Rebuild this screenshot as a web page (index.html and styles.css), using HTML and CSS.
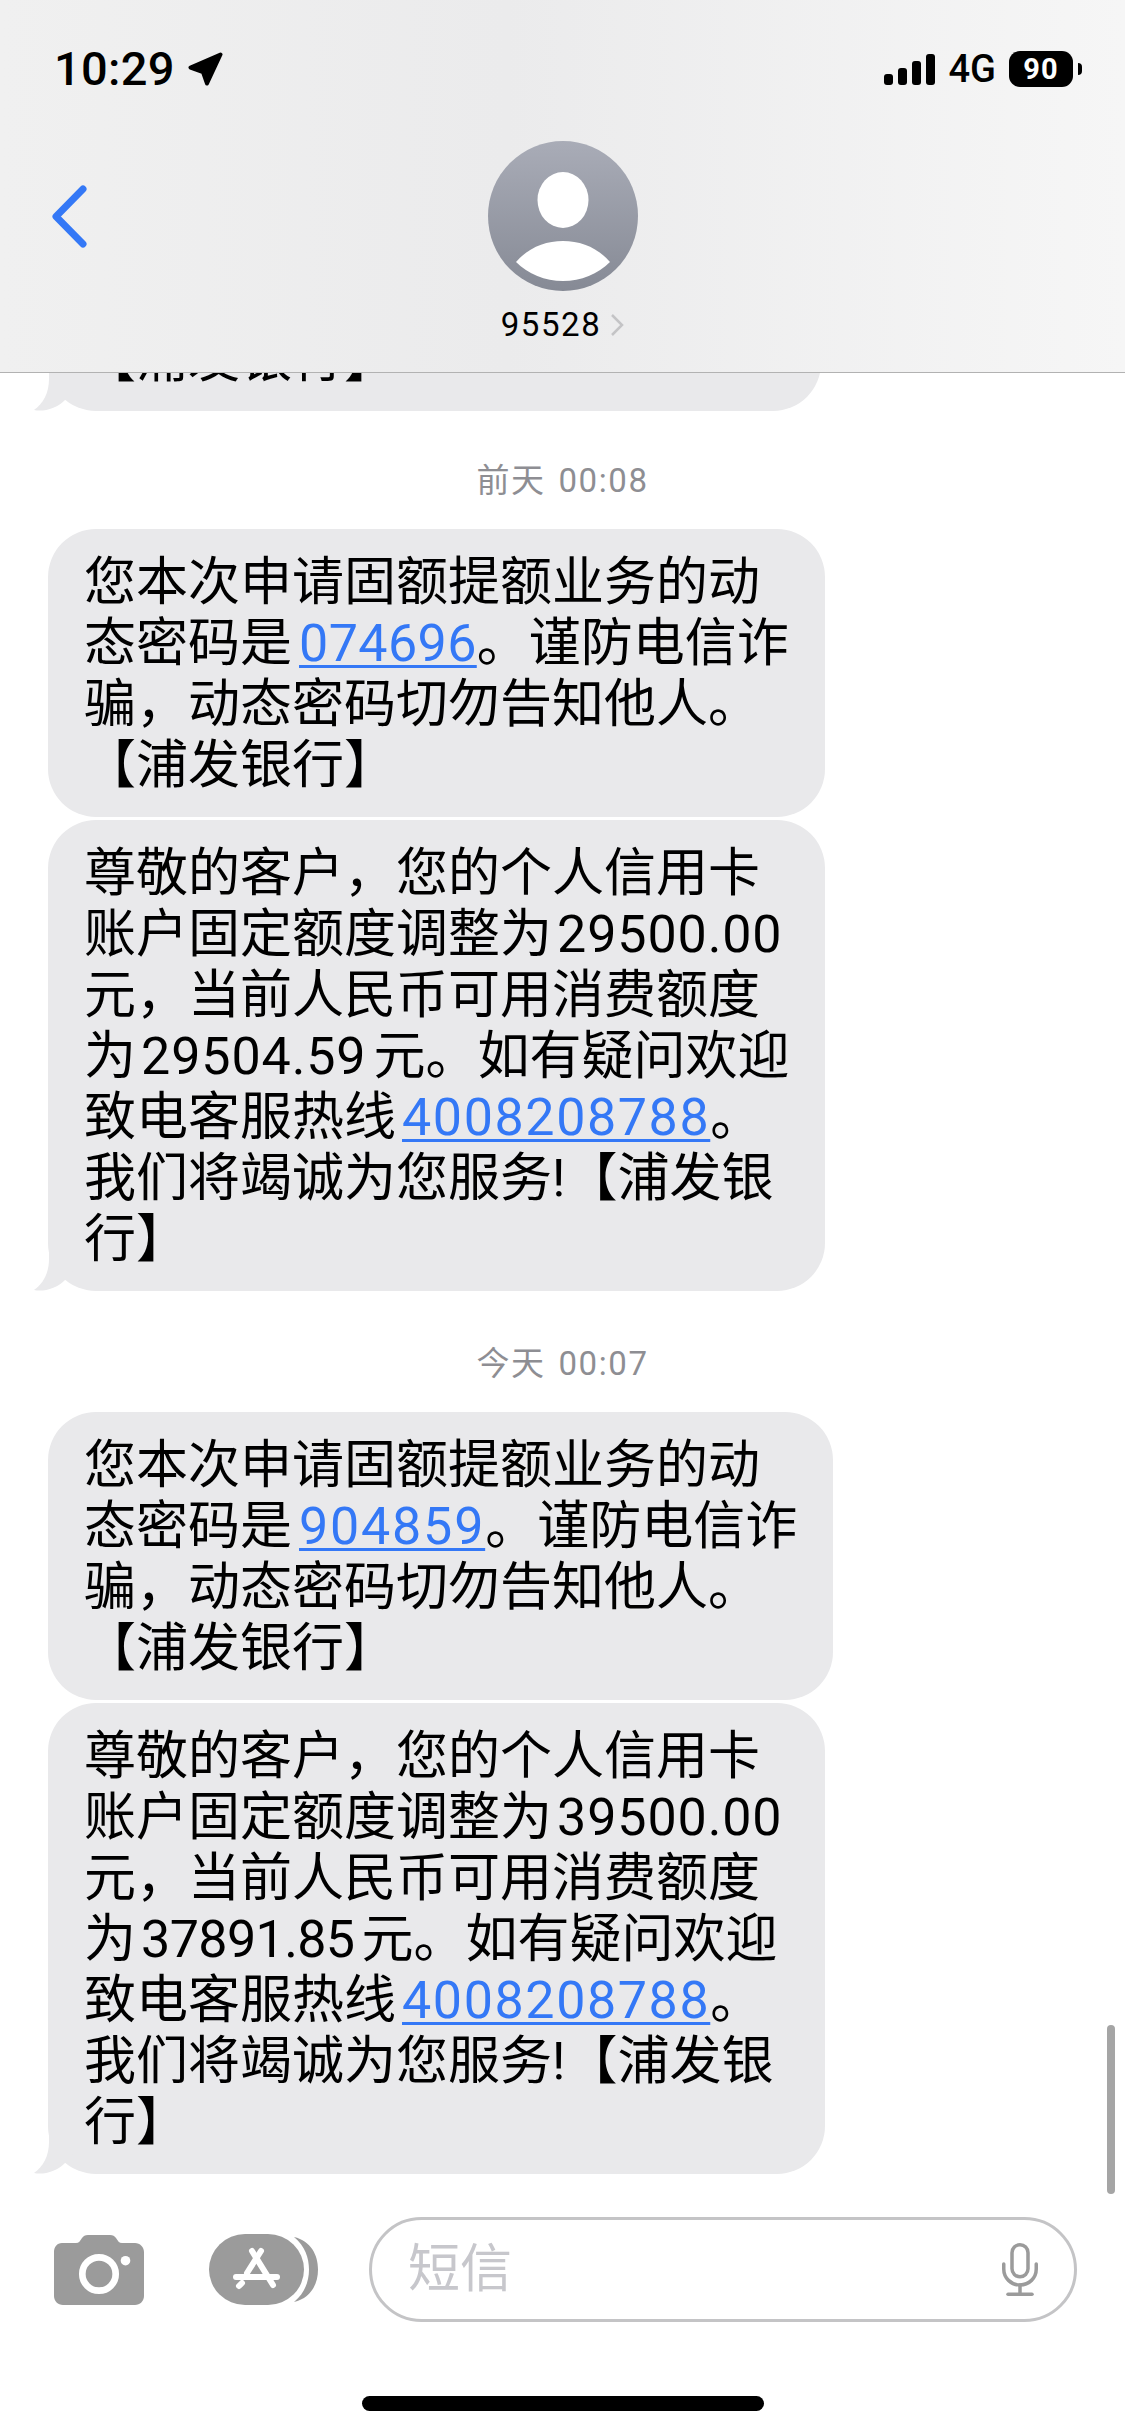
FILE: index.html
```html
<!doctype html>
<html lang="zh-CN">
	<head>
	<meta charset="utf-8">
	<title>95528</title>
	<link rel="stylesheet" href="styles.css">
	</head>
	<body>

		<header class="top">
			<div class="status">
				<div class="status-left">
					<span class="clock">10:29</span>
					<svg class="loc" viewBox="0 0 35 34"><path d="M32.5 2.5 2.5 15.5 15 20 19 31.5Z"/></svg>
				</div>
				<div class="status-right">
					<svg class="signal" viewBox="0 0 51 31">
						<rect x="0" y="20" width="9" height="11" rx="3"/>
						<rect x="14" y="14" width="9" height="17" rx="3"/>
						<rect x="28" y="7" width="9" height="24" rx="3"/>
						<rect x="42" y="0" width="9" height="31" rx="3"/>
					</svg>
					<span class="net">4G</span>
					<span class="battery">90</span>
					<span class="battery-nub"></span>
				</div>
			</div>
			<div class="nav">
				<svg class="back" viewBox="0 0 36 63"><path d="M32 4 5 31.5 32 59"/></svg>
				<div class="contact">
					<svg class="avatar" viewBox="0 0 150 150">
						<defs>
							<linearGradient id="avatar-bg" x1="0" y1="0" x2="0" y2="1">
								<stop offset="0" stop-color="#a9acb7"/>
								<stop offset="1" stop-color="#868a95"/>
							</linearGradient>
						</defs>
						<circle cx="75" cy="75" r="75" fill="url(#avatar-bg)"/>
						<ellipse cx="75" cy="59" rx="25.5" ry="28" fill="#fff"/>
						<path d="M28 121C40 107 57 100 75 100S110 107 122 121C110 133 93 140 75 140S40 133 28 121Z" fill="#fff"/>
					</svg>
					<div class="name">95528<svg class="name-arrow" viewBox="0 0 14 24"><path d="M2 2 12 12 2 22"/></svg></div>
				</div>
			</div>
		</header>

		<main class="thread">
			<div class="bubble bubble-cut">【浦发银行】
				<svg class="tail" viewBox="0 0 40 40"><path d="M16 0V8C16 22 10 33 1 39 10 41 24 38 33 28L40 20V0Z"/></svg>
			</div>

			<p class="stamp">前天 00:08</p>
			<div class="bubble">您本次申请固额提额业务的动<br>态密码是<a class="link otp">074696</a>。谨防电信诈<br>骗，动态密码切勿告知他人。<br>【浦发银行】</div>
			<div class="bubble">尊敬的客户，您的个人信用卡<br>账户固定额度调整为<span class="num">29500.00</span><br>元，当前人民币可用消费额度<br>为<span class="num">29504.59</span>元。如有疑问欢迎<br>致电客服热线<a class="link tel">4008208788</a>。<br>我们将竭诚为您服务!【浦发银<br>行】
				<svg class="tail" viewBox="0 0 40 40"><path d="M16 0V8C16 22 10 33 1 39 10 41 24 38 33 28L40 20V0Z"/></svg>
			</div>

			<p class="stamp">今天 00:07</p>
			<div class="bubble bubble-wide">您本次申请固额提额业务的动<br>态密码是<a class="link otp otp-wide">904859</a>。谨防电信诈<br>骗，动态密码切勿告知他人。<br>【浦发银行】</div>
			<div class="bubble">尊敬的客户，您的个人信用卡<br>账户固定额度调整为<span class="num">39500.00</span><br>元，当前人民币可用消费额度<br>为<span class="num num-narrow">37891.85</span>元。如有疑问欢迎<br>致电客服热线<a class="link tel">4008208788</a>。<br>我们将竭诚为您服务!【浦发银<br>行】
				<svg class="tail" viewBox="0 0 40 40"><path d="M16 0V8C16 22 10 33 1 39 10 41 24 38 33 28L40 20V0Z"/></svg>
			</div>
		</main>

		<footer class="composer">
			<div class="composer-row">
				<svg class="camera" viewBox="0 0 90 70">
					<path d="M8 8H22C25 8 26 6 28 3 29.500 1 31 0 34 0H56C59 0 60.500 1 62 3 64 6 65 8 68 8H81C86 8 90 12 90 17V61C90 66 86 70 81 70H9C4 70 0 66 0 61V17C0 12 3 8 8 8Z" fill="#9b9b9b"/>
					<circle cx="45" cy="39" r="16.700" fill="none" stroke="#fff" stroke-width="6.700"/>
					<circle cx="71.500" cy="25.700" r="4.800" fill="#fff"/>
				</svg>
				<svg class="apps" viewBox="0 0 110 71">
					<rect x="0" y="0" width="95" height="71" rx="36" ry="35.500" fill="#9b9b9b"/>
					<path d="M85 3C102 7 109 21 109 35.500S102 64 85 68C96 59 100 47 100 35.500S96 12 85 3Z" fill="#9b9b9b"/>
					<g stroke="#fff" stroke-width="6" stroke-linecap="round" fill="none">
						<path d="M43 17 64 51"/>
						<path d="M52 17 38 39"/>
						<path d="M33 49 30 52"/>
						<path d="M27 43H68"/>
					</g>
				</svg>
				<div class="input">
					<span class="hint">短信</span>
					<svg class="mic" viewBox="0 0 36 53" fill="none" stroke="#9b9b9b" stroke-width="3.500" stroke-linecap="round">
						<rect x="10" y="1.750" width="16" height="32" rx="8"/>
						<path d="M1.750 21V26C1.750 35 9 42 18 42S34.250 35 34.250 26V21"/>
						<path d="M18 42V51"/>
						<path d="M6 51.250H30"/>
					</svg>
				</div>
			</div>
			<div class="home-bar"></div>
		</footer>

		<div class="scrollbar"></div>

	</body>
</html>
```

FILE: styles.css
```css
* {
	box-sizing: border-box;
}

body {
	position: relative;
	display: flex;
	flex-direction: column;
	width: 1125px;
	height: 2436px;
	margin: 0;
	overflow: hidden;
	background-color: #fff;
	color: #000;
	font-family: Roboto, "Noto Sans CJK SC", sans-serif;
}

/* header */
.top {
	flex: none;
	height: 373px;
	border-bottom: 1px solid #b2b2b2;
	background: linear-gradient(90deg, #f0f0f0 0%, #ebebec 45%, #f6f6f6 100%);
}

.status {
	display: flex;
	justify-content: space-between;
	padding: 51px 43px 0 54px;
}

.status-left,
.status-right {
	display: flex;
	align-items: center;
	height: 36px;
}

.clock {
	font-size: 47px;
	font-weight: 500;
	line-height: 36px;
	letter-spacing: 0.300px;
}

.loc {
	width: 35px;
	height: 34px;
	margin-left: 13px;
	fill: #000;
	stroke: #000;
	stroke-width: 4;
	stroke-linejoin: round;
}

.signal {
	width: 51px;
	height: 31px;
	fill: #000;
}

.net {
	margin-left: 14px;
	font-size: 38px;
	font-weight: 500;
	line-height: 36px;
}

.battery {
	width: 64px;
	height: 36px;
	margin-left: 13px;
	border-radius: 11px;
	background-color: #000;
	color: #fff;
	font-size: 29px;
	font-weight: 700;
	line-height: 36px;
	letter-spacing: 1px;
	text-align: center;
}

.battery-nub {
	width: 4px;
	height: 12px;
	margin-left: 5px;
	border-radius: 0 6px 6px 0;
	background-color: #000;
}

.nav {
	display: grid;
	grid-template-columns: 1fr auto 1fr;
	margin-top: 54px;
}

.back {
	width: 36px;
	height: 63px;
	margin: 44px 0 0 51px;
	fill: none;
	stroke: #3478f6;
	stroke-width: 7;
	stroke-linecap: round;
	stroke-linejoin: round;
}

.contact {
	display: flex;
	flex-direction: column;
	align-items: center;
}

.avatar {
	display: block;
	width: 150px;
	height: 150px;
}

.name {
	display: flex;
	align-items: center;
	margin-top: 15px;
	font-size: 33px;
	line-height: 37px;
	letter-spacing: 1.600px;
}

.name-arrow {
	width: 14px;
	height: 24px;
	margin-left: 9px;
	fill: none;
	stroke: #c4c4c6;
	stroke-width: 2.500;
}

/* messages */
.thread {
	flex: 1;
	display: flex;
	flex-direction: column;
	justify-content: flex-end;
	align-items: flex-start;
	min-height: 0;
	overflow: hidden;
}

.bubble {
	flex: none;
	position: relative;
	width: 777px;
	margin: 0 0 3px 48px;
	padding: 23px 36px 21px;
	border-radius: 48px;
	background-color: #e9e9eb;
	font-size: 52px;
	line-height: 61px;
	white-space: nowrap;
}

.bubble:last-child {
	margin-bottom: 0;
}

.bubble-cut {
	width: 773px;
	margin-bottom: 0;
}

.bubble-wide {
	width: 785px;
}

.tail {
	position: absolute;
	left: -15px;
	bottom: 0;
	width: 40px;
	height: 40px;
	fill: #e9e9eb;
}

.stamp {
	flex: none;
	align-self: center;
	height: 40px;
	margin: 50px 0 28px;
	color: #8e8e93;
	font-size: 33px;
	line-height: 40px;
	letter-spacing: 1.600px;
	word-spacing: 3px;
}

.link {
	color: #3478f6;
	text-decoration: underline;
	text-decoration-thickness: 3px;
	text-underline-offset: 4px;
}

.otp {
	margin-left: 7px;
	letter-spacing: 0.400px;
}

.otp-wide {
	letter-spacing: 1.800px;
}

.tel {
	margin-left: 6px;
	letter-spacing: 1.600px;
}

.num {
	margin: 0 7px 0 5px;
	letter-spacing: 0.900px;
}

.num-narrow {
	letter-spacing: -0.600px;
}

/* bottom bar */
.composer {
	flex: none;
	height: 262px;
	padding-top: 43px;
}

.composer-row {
	display: flex;
	align-items: center;
	padding-left: 54px;
}

.camera {
	width: 90px;
	height: 70px;
}

.apps {
	width: 110px;
	height: 71px;
	margin-left: 65px;
}

.input {
	display: flex;
	justify-content: space-between;
	align-items: center;
	width: 708px;
	height: 105px;
	margin-left: 50px;
	padding: 0 36px 0 36px;
	border: 3px solid #c4c4c6;
	border-radius: 53px;
}

.hint {
	color: #c7c7cc;
	font-size: 52px;
	line-height: 61px;
}

.mic {
	width: 36px;
	height: 53px;
}

.home-bar {
	width: 402px;
	height: 15px;
	margin: 74px auto 0;
	border-radius: 8px;
	background-color: #000;
}

.scrollbar {
	position: absolute;
	top: 2025px;
	left: 1107px;
	width: 8px;
	height: 169px;
	border-radius: 4px;
	background-color: #a5a5a5;
}
```
